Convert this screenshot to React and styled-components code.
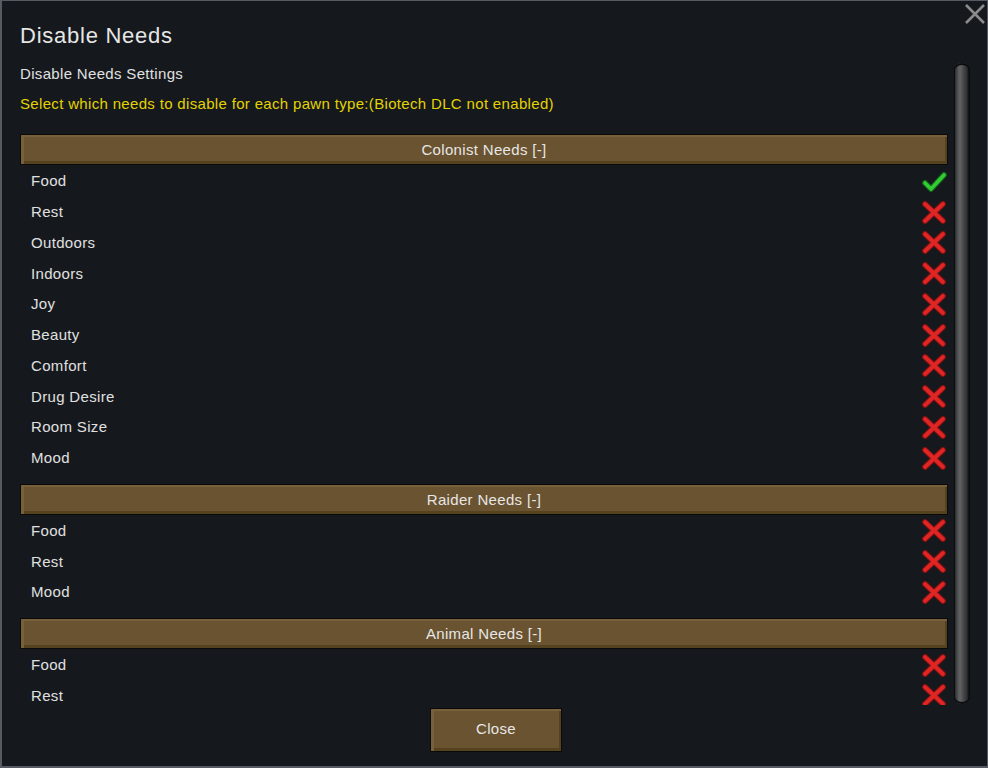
import React from "react";
import styled, { createGlobalStyle } from "styled-components";

const GlobalStyle = createGlobalStyle`
  html, body {
    margin: 0;
    padding: 0;
    background: #15181d;
  }
  * {
    box-sizing: border-box;
  }
`;

// Outer dialog frame
const Window = styled.div`
  position: relative;
  width: 988px;
  height: 768px;
  overflow: hidden;
  display: flex;
  flex-direction: column;
  background: #15181d;
  border-style: solid;
  border-color: #565b63;
  border-width: 1px 1px 2px 2px;
  padding: 22px 17px 0 18px;
  font-family: "Liberation Sans", Arial, sans-serif;
  letter-spacing: 0.33px;
  color: #e0e0e0;
`;

const CloseCross = styled.button`
  position: absolute;
  top: 2px;
  right: 1px;
  width: 22px;
  height: 22px;
  padding: 0;
  border: 0;
  background: none;
  cursor: pointer;
  display: flex;
`;

const Title = styled.h1`
  margin: 0;
  font-size: 22px;
  font-weight: normal;
  line-height: 26px;
  letter-spacing: 0.75px;
  color: #e6e6e6;
`;

// Scrolling list region with its bar
const ScrollArea = styled.div`
  margin-top: 14px;
  height: 642px;
  display: flex;
  gap: 6px;
`;

const ScrollContent = styled.div`
  flex: 1;
  overflow: hidden;
  padding-top: 1px;
`;

const ScrollBar = styled.div`
  width: 16px;
  height: 641px;
  border-radius: 8px;
  background: linear-gradient(
    to right,
    #0b0c0d 0 1px,
    #2c2d2f 1px,
    #535456 4px,
    #626365 6px,
    #4a4b4d 9px,
    #2e2f31 13px,
    #0b0c0d 15px
  );
  box-shadow: inset 0 2px 0 #0b0c0d, inset 0 -2px 0 #0b0c0d;
`;

const Subtitle = styled.div`
  font-size: 15px;
  line-height: 20px;
`;

const Notice = styled.div`
  margin-top: 10px;
  margin-bottom: 20px;
  font-size: 15px;
  line-height: 20px;
  color: #e3d300;
`;

const Section = styled.section`
  margin-top: 11px;
`;

// Brown bevelled bar, used for headers and the close button
const BevelButton = styled.button`
  display: flex;
  align-items: center;
  justify-content: center;
  width: ${(p) => p.$width || "100%"};
  height: ${(p) => p.$height || "31px"};
  padding: 0 0 ${(p) => p.$lift || "0"} 0;
  border: 1px solid #0a0a0a;
  background: #6a5330;
  box-shadow: inset 3px 2px 0 #77603a, inset -2px -3px 0 #55421f;
  font-family: inherit;
  font-size: 15px;
  letter-spacing: inherit;
  color: #e6e6e6;
  cursor: pointer;
`;

const Row = styled.div`
  display: flex;
  align-items: center;
  justify-content: space-between;
  height: 30.75px;
  padding: 1px 1px 0 11px;
  font-size: 15px;
  line-height: 15px;
`;

const IconSlot = styled.span`
  display: flex;
  align-items: center;
  justify-content: center;
  width: 26px;
  height: 26px;
  margin-top: 2px;
`;

const Footer = styled.div`
  display: flex;
  justify-content: center;
  margin-top: 3px;
  padding-left: 2px;
`;

const CheckIcon = () => (
  <svg width="26" height="26" viewBox="0 0 26 26">
    <polyline points="4,14 10,20 23,6" fill="none" stroke="#14621a" strokeWidth="6" strokeLinecap="round" strokeLinejoin="round" />
    <polyline points="4,14 10,20 23,6" fill="none" stroke="#33cc33" strokeWidth="3.6" strokeLinecap="round" strokeLinejoin="round" />
  </svg>
);

const CrossIcon = () => (
  <svg width="26" height="26" viewBox="0 0 26 26">
    <path d="M4 4 L22 21 M22 4 L4 21" fill="none" stroke="#7a1212" strokeWidth="6" strokeLinecap="round" />
    <path d="M4 4 L22 21 M22 4 L4 21" fill="none" stroke="#e02525" strokeWidth="3.8" strokeLinecap="round" />
  </svg>
);

const sections = [
  {
    title: "Colonist Needs [-]",
    needs: [
      ["Food", true],
      ["Rest", false],
      ["Outdoors", false],
      ["Indoors", false],
      ["Joy", false],
      ["Beauty", false],
      ["Comfort", false],
      ["Drug Desire", false],
      ["Room Size", false],
      ["Mood", false],
    ],
  },
  {
    title: "Raider Needs [-]",
    needs: [
      ["Food", false],
      ["Rest", false],
      ["Mood", false],
    ],
  },
  {
    title: "Animal Needs [-]",
    needs: [
      ["Food", false],
      ["Rest", false],
    ],
  },
];

const App = () => {
  return (
    <>
      <GlobalStyle />
      <Window>
        <CloseCross aria-label="close">
          <svg width="22" height="22" viewBox="0 0 22 22">
            <path d="M2 2 L20 20 M20 2 L2 20" stroke="#8a8b8c" strokeWidth="2.6" />
          </svg>
        </CloseCross>
        <Title>Disable Needs</Title>
        <ScrollArea>
          <ScrollContent>
            <Subtitle>Disable Needs Settings</Subtitle>
            <Notice>Select which needs to disable for each pawn type:(Biotech DLC not enabled)</Notice>
            {sections.map((s) => (
              <Section key={s.title}>
                <BevelButton>{s.title}</BevelButton>
                {s.needs.map(([name, on]) => (
                  <Row key={name}>
                    <span>{name}</span>
                    <IconSlot>{on ? <CheckIcon /> : <CrossIcon />}</IconSlot>
                  </Row>
                ))}
              </Section>
            ))}
          </ScrollContent>
          <ScrollBar />
        </ScrollArea>
        <Footer>
          <BevelButton $width="132px" $height="44px" $lift="3px">Close</BevelButton>
        </Footer>
      </Window>
    </>
  );
};

export default App;
